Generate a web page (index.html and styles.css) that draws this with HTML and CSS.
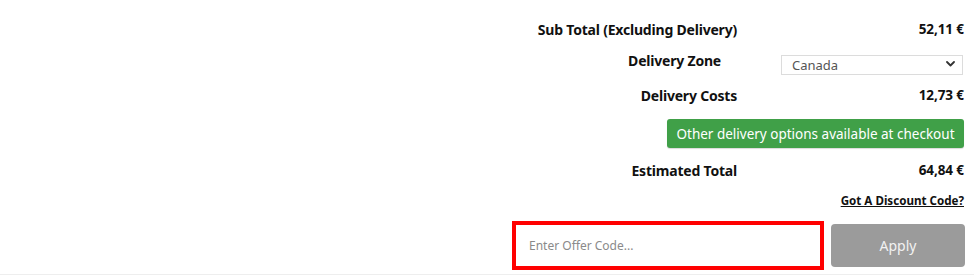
FILE: index.html
```html
<!DOCTYPE html>
<html lang="en">
<head>
<meta charset="utf-8">
<title>Cart summary</title>
<link rel="stylesheet" href="styles.css">
</head>
<body>
<div class="page">
  <div class="summary">
    <div class="row row-subtotal">
      <span class="label">Sub Total (Excluding Delivery)</span>
      <span class="value">52,11 €</span>
    </div>
    <div class="row row-zone">
      <label class="label label-zone" for="zone">Delivery Zone</label>
      <div class="select-wrap">
        <select id="zone" class="select">
          <option>Canada</option>
        </select>
        <svg class="chevron" width="9" height="6" viewBox="0 0 9 6" aria-hidden="true">
          <path d="M1 1 L4.5 4.5 L8 1" fill="none" stroke="#333" stroke-width="1.8" stroke-linecap="round" stroke-linejoin="round"/>
        </svg>
      </div>
    </div>
    <div class="row row-costs">
      <span class="label">Delivery Costs</span>
      <span class="value">12,73 €</span>
    </div>
    <div class="row row-notice">
      <div class="notice">Other delivery options available at checkout</div>
    </div>
    <div class="row row-total">
      <span class="label">Estimated Total</span>
      <span class="value">64,84 €</span>
    </div>
    <div class="row row-discount">
      <a class="discount-link" href="#">Got A Discount Code?</a>
    </div>
    <div class="row row-offer">
      <input class="offer-input" type="text" placeholder="Enter Offer Code...">
      <button class="apply-btn" type="button">Apply</button>
    </div>
  </div>
</div>
</body>
</html>
```

FILE: styles.css
```css
* { box-sizing: border-box; }

html, body {
  margin: 0;
  padding: 0;
  background: #ffffff;
}

body {
  font-family: "Noto Sans", "Liberation Sans", sans-serif;
  color: #111111;
}

.page {
  width: 974px;
  height: 276px;
  padding-top: 14px;
}

.page::after {
  content: "";
  display: block;
  height: 1px;
  background: #eeeeee;
  margin-top: 4px;
}

.summary {
  width: 453px;
  margin-left: 512px;
  display: flex;
  flex-direction: column;
}

.row {
  display: flex;
  align-items: center;
}

.label {
  width: 225px;
  text-align: right;
  font-weight: 700;
  font-size: 14px;
  letter-spacing: -0.2px;
  white-space: nowrap;
}

.value {
  margin-left: auto;
  margin-right: 1px;
  font-weight: 700;
  font-size: 13.5px;
  letter-spacing: -0.1px;
}

.row-subtotal { height: 30px; }

.row-zone { height: 38px; }
.label-zone {
  padding-right: 16px;
  padding-bottom: 6px;
}

.select-wrap {
  position: relative;
  margin-left: 44px;
  width: 182px;
  height: 20px;
}

.select {
  -webkit-appearance: none;
  appearance: none;
  width: 100%;
  height: 20px;
  border: 1px solid #dcdcdc;
  border-radius: 0;
  background: #ffffff;
  padding: 0 0 0 10px;
  font-family: "Noto Sans", "Liberation Sans", sans-serif;
  font-size: 13px;
  color: #555555;
  line-height: 18px;
}

.chevron {
  position: absolute;
  right: 8px;
  top: 8px;
  pointer-events: none;
}

.row-costs { height: 26px; }

.row-notice {
  margin-top: 11px;
  height: 29px;
  justify-content: flex-end;
}

.notice {
  width: 297px;
  height: 29px;
  margin-right: 1px;
  background: #40a048;
  border-radius: 3px;
  color: #ffffff;
  font-size: 13.5px;
  display: flex;
  align-items: center;
  justify-content: center;
  box-shadow: 0 1px 1px rgba(0, 0, 0, 0.15);
}

.row-total {
  margin-top: 10px;
  height: 24px;
}

.row-discount {
  margin-top: 10px;
  height: 16px;
  justify-content: flex-end;
}

.discount-link {
  margin-right: 1px;
  font-size: 11.6px;
  font-weight: 700;
  color: #111111;
  text-decoration: underline;
}

.row-offer {
  margin-top: 13px;
  height: 49px;
  align-items: stretch;
}

.offer-input {
  width: 312px;
  height: 49px;
  border: 4px solid #ff0000;
  border-radius: 0;
  padding: 0 0 0 13px;
  font-family: "Noto Sans", "Liberation Sans", sans-serif;
  font-size: 12px;
  color: #333333;
  outline: none;
}

.offer-input::placeholder {
  color: #8a8a8a;
}

.apply-btn {
  margin-left: 7px;
  margin-top: 3px;
  width: 134px;
  height: 43px;
  border: none;
  border-radius: 4px;
  background: #9b9b9b;
  color: #f2f2f2;
  font-family: "Noto Sans", "Liberation Sans", sans-serif;
  font-size: 14px;
}
```
